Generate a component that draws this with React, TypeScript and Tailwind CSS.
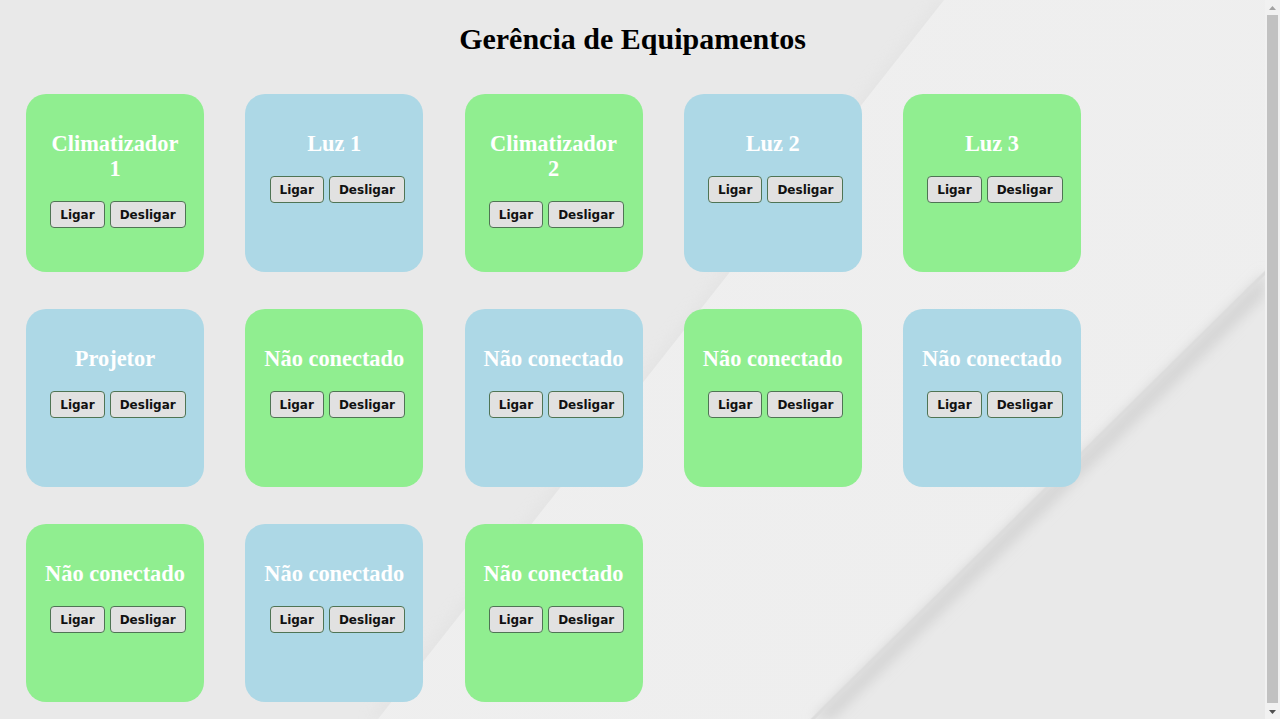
const devices = [
  { name: "Climatizador 1", color: "green" },
  { name: "Luz 1", color: "blue" },
  { name: "Climatizador 2", color: "green" },
  { name: "Luz 2", color: "blue" },
  { name: "Luz 3", color: "green" },
  { name: "Projetor", color: "blue" },
  { name: "Não conectado", color: "green" },
  { name: "Não conectado", color: "blue" },
  { name: "Não conectado", color: "green" },
  { name: "Não conectado", color: "blue" },
  { name: "Não conectado", color: "green" },
  { name: "Não conectado", color: "blue" },
  { name: "Não conectado", color: "green" },
];

function Background() {
  return (
    <svg
      className="pointer-events-none absolute inset-0 h-full w-full"
      viewBox="0 0 1265 719"
      preserveAspectRatio="none"
    >
      <defs>
        <filter id="soft" x="-20%" y="-20%" width="140%" height="140%">
          <feGaussianBlur stdDeviation="6" />
        </filter>
        <linearGradient id="band" x1="0" y1="0" x2="1" y2="1">
          <stop offset="0" stopColor="#efefef" />
          <stop offset="1" stopColor="#eeeeee" />
        </linearGradient>
      </defs>
      <rect width="1265" height="719" fill="#e9e9e9" />
      {/* soft shadow along the upper edge */}
      <polygon points="936,0 960,0 395,719 368,719" fill="#e2e2e2" filter="url(#soft)" opacity="0.6" />
      {/* lighter diagonal band */}
      <polygon points="944,0 1265,0 1265,270 810,719 378,719" fill="url(#band)" />
      {/* shadow under the band's lower edge */}
      <polygon points="1265,272 1265,296 834,719 812,719" fill="#d6d6d6" filter="url(#soft)" />
      <polygon points="1265,271 1265,275 815,719 811,719" fill="#dcdcdc" />
    </svg>
  );
}

function DeviceCard({ name, color }: { name: string; color: string }) {
  return (
    <div
      className={
        "flex h-[178px] w-[178px] flex-col items-center rounded-[20px] pt-[37px] " +
        (color === "green" ? "bg-[#90ee90]" : "bg-[#add8e6]")
      }
    >
      <h2 className="w-[141px] text-center font-['Liberation_Serif',serif] text-[22.4px] font-bold leading-[25px] text-white">
        {name}
      </h2>
      <div className="mt-[20px] flex gap-[5px] pl-[6px]">
        <button className="h-[27px] rounded-[4px] border border-[#4f7454] bg-[#e1e1e1] px-[9px] font-['DejaVu_Sans',sans-serif] text-[12px] font-bold text-[#111]">
          Ligar
        </button>
        <button className="h-[27px] rounded-[4px] border border-[#4f7454] bg-[#e1e1e1] px-[9px] font-['DejaVu_Sans',sans-serif] text-[12px] font-bold text-[#111]">
          Desligar
        </button>
      </div>
    </div>
  );
}

function Scrollbar() {
  return (
    <div className="flex w-[15px] flex-col items-center bg-[#f1f1f1]">
      <div className="flex h-[15px] items-center justify-center">
        <svg width="7" height="4" viewBox="0 0 7 4">
          <polygon points="3.5,0 7,4 0,4" fill="#a3a3a3" />
        </svg>
      </div>
      <div className="mb-[1px] w-[11px] flex-1 bg-[#c1c1c1]" />
      <div className="flex h-[15px] items-center justify-center">
        <svg width="7" height="4" viewBox="0 0 7 4">
          <polygon points="0,0 7,0 3.5,4" fill="#505050" />
        </svg>
      </div>
    </div>
  );
}

export default function App() {
  return (
    <div className="flex h-screen overflow-hidden">
      <main className="relative flex-1 overflow-hidden">
        <Background />
        <div className="relative">
          <h1 className="pt-[22px] text-center font-['Liberation_Serif',serif] text-[30px] font-bold leading-[33px] text-black">
            Gerência de Equipamentos
          </h1>
          <div className="mt-[39px] flex flex-wrap gap-x-[41.25px] gap-y-[37px] pl-[26px]">
            {devices.map((d, i) => (
              <DeviceCard key={i} name={d.name} color={d.color} />
            ))}
          </div>
        </div>
      </main>
      <Scrollbar />
    </div>
  );
}
